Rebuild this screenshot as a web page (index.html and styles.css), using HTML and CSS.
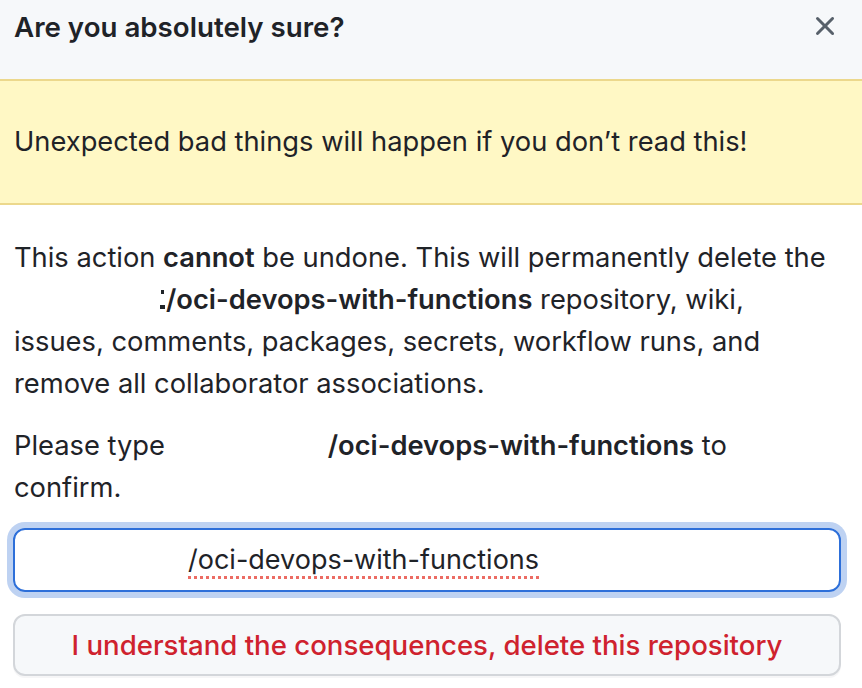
FILE: index.html
```html
<!DOCTYPE html>
<html lang="en">
<head>
<meta charset="utf-8">
<title>Delete repository</title>
<link rel="stylesheet" href="styles.css">
</head>
<body>
<div class="dialog">
  <div class="dialog-header">
    <h1 class="dialog-title">Are you absolutely sure?</h1>
    <button class="close-btn" aria-label="Close">
      <svg viewBox="0 0 16 16" width="32" height="32" aria-hidden="true"><path fill="currentColor" d="M3.72 3.72a.75.75 0 0 1 1.06 0L8 6.94l3.22-3.22a.749.749 0 0 1 1.275.326.749.749 0 0 1-.215.734L9.06 8l3.22 3.22a.749.749 0 0 1-.326 1.275.749.749 0 0 1-.734-.215L8 9.06l-3.22 3.22a.751.751 0 0 1-1.042-.018.751.751 0 0 1-.018-1.042L6.94 8 3.72 4.78a.75.75 0 0 1 0-1.06Z"/></svg>
    </button>
  </div>
  <div class="flash-warn">Unexpected bad things will happen if you don’t read this!</div>
  <div class="dialog-body">
    <p class="text">This action <strong>cannot</strong> be undone. This will permanently delete the<br><span class="redact r-line2"></span><span class="remnant"></span><strong>/oci-devops-with-functions</strong> repository, wiki,<br>issues, comments, packages, secrets, workflow runs, and<br>remove all collaborator associations.</p>
    <p class="text">Please type <span class="redact r-type"></span><strong>/oci-devops-with-functions</strong> to<br>confirm.</p>
    <div class="input-field"><span class="redact r-input"></span><span class="typed">/oci-devops-with-functions</span></div>
    <button class="danger-btn">I understand the consequences, delete this repository</button>
  </div>
</div>
</body>
</html>
```
FILE: styles.css
```css
* { box-sizing: border-box; }
html, body { margin: 0; padding: 0; background: #ffffff; }
body {
  font-family: Inter, "Noto Sans", "Liberation Sans", sans-serif;
  font-size: 27.3px;
  line-height: 42px;
  color: #1f2328;
  width: 862px;
  height: 688px;
  overflow: hidden;
}
.dialog { display: flex; flex-direction: column; }
.dialog-header {
  background: #f6f8fa;
  height: 79px;
  padding: 6px 21px 0 14px;
  display: flex;
  justify-content: space-between;
  align-items: flex-start;
}
.dialog-title {
  margin: 0;
  font-size: 27.7px;
  line-height: 42px;
  font-weight: 600;
}
.close-btn {
  margin-top: 4px;
  border: 0;
  padding: 0;
  background: transparent;
  color: #57606a;
  width: 32px;
  height: 32px;
  display: flex;
}
.flash-warn {
  background: #fff8c5;
  border-top: 2px solid #ecd88c;
  border-bottom: 2px solid #ecd88c;
  padding: 40px 14px;
  height: 126px;
}
.dialog-body {
  padding: 32px 21px 0 13px;
  display: flex;
  flex-direction: column;
}
.text {
  margin: 0 0 20px 1px;
  white-space: nowrap;
}
.text strong { font-weight: 600; }
.redact { display: inline-block; height: 1px; }
.r-line2 { width: 146px; }
.r-type { width: 155px; }
.r-input { width: 149px; }
.remnant {
  display: inline-block;
  width: 5px;
  height: 20px;
  margin-right: 1px;
  background:
    linear-gradient(#1f2328, #1f2328) 1px 1px / 3px 4px no-repeat,
    linear-gradient(#1f2328, #1f2328) 0 16px / 5px 4px no-repeat;
}
.input-field {
  margin-top: -1px;
  height: 64px;
  border: 2px solid #2d6fd9;
  border-radius: 12px;
  box-shadow: 0 0 0 6px #bed2f2;
  padding: 0 24px;
  display: flex;
  align-items: center;
  white-space: nowrap;
  line-height: 42px;
  font-size: 27px;
}
.typed {
  text-decoration: underline dotted #ec6c64;
  text-decoration-thickness: 3px;
  text-underline-offset: 7px;
}
.danger-btn {
  margin-top: 22px;
  height: 62px;
  width: 100%;
  background: #f6f8fa;
  border: 2px solid #d3d6da;
  border-radius: 12px;
  box-shadow: 0 2px 0 rgba(31, 35, 40, 0.04);
  color: #cf222e;
  font-family: inherit;
  font-size: 27.6px;
  font-weight: 500;
  line-height: 42px;
  padding: 0 24px;
}
```
